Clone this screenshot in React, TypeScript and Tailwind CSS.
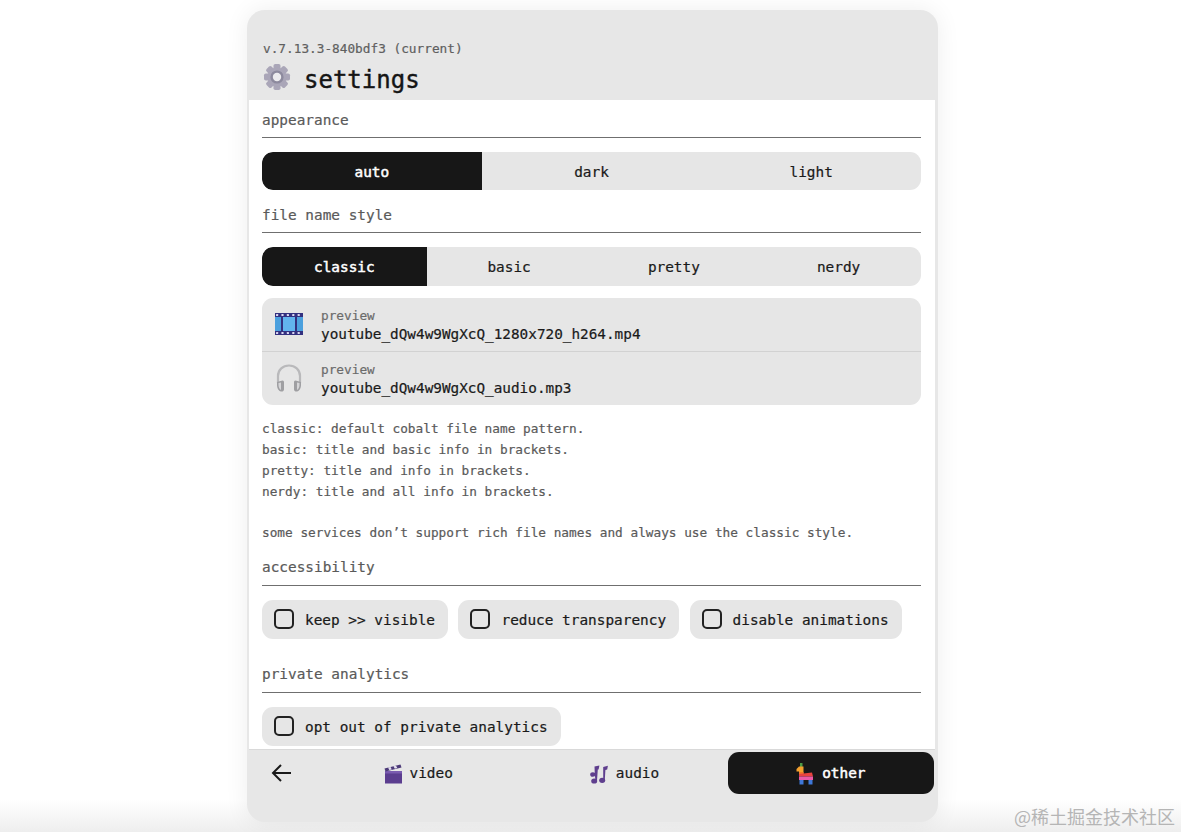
import { ReactNode } from 'react'

const mono = "font-['DejaVu_Sans_Mono','Liberation_Mono',monospace]"

function GearIcon() {
  const teeth = [0, 45, 90, 135, 180, 225, 270, 315]
  return (
    <svg width="28" height="28" viewBox="0 0 28 28">
      {teeth.map((a) => (
        <rect key={a} x="10.5" y="1" width="7" height="7" rx="1.8" fill="#aaa6b8" transform={`rotate(${a} 14 14)`} />
      ))}
      <circle cx="14" cy="14" r="9.5" fill="#aaa6b8" />
      <circle cx="14" cy="14" r="6.6" fill="#8d8a9e" />
      <circle cx="14" cy="14" r="4.2" fill="#ecebee" />
    </svg>
  )
}

function FilmIcon() {
  const holes = [2, 7.4, 12.8, 18.2, 23.6]
  return (
    <svg width="30" height="24" viewBox="0 0 30 24">
      <rect x="1" y="1" width="28" height="22" fill="#33307f" />
      <rect x="1" y="5" width="6" height="14" fill="#4ba0de" />
      <rect x="9" y="5" width="12" height="14" fill="#62b4ee" />
      <rect x="23" y="5" width="6" height="14" fill="#4ba0de" />
      {holes.map((x) => (
        <g key={x}>
          <rect x={x} y="2" width="2.2" height="2" rx="0.6" fill="#dcd8f2" />
          <rect x={x} y="20" width="2.2" height="2" rx="0.6" fill="#dcd8f2" />
        </g>
      ))}
    </svg>
  )
}

function HeadphonesIcon() {
  return (
    <svg width="30" height="30" viewBox="0 0 30 30">
      <path d="M4 20 V13 C4 6.5 9 2.5 15 2.5 C21 2.5 26 6.5 26 13 V20" fill="none" stroke="#b9b9bb" strokeWidth="2.2" />
      <path d="M3 19 L8.5 17.5 C9.8 17.5 10 18.5 10 19.5 L10 26.5 C10 28 8.5 28.8 7 28.5 C4.5 28 3 25 3 22 Z" fill="#9f9fa2" />
      <path d="M27 19 L21.5 17.5 C20.2 17.5 20 18.5 20 19.5 L20 26.5 C20 28 21.5 28.8 23 28.5 C25.5 28 27 25 27 22 Z" fill="#9f9fa2" />
      <path d="M4.5 20 L7 19.5 L7 27 C5.5 26.5 4.5 24 4.5 22 Z" fill="#d6d6d8" />
      <path d="M25.5 20 L23 19.5 L23 27 C24.5 26.5 25.5 24 25.5 22 Z" fill="#d6d6d8" />
    </svg>
  )
}

function ClapperIcon() {
  return (
    <svg width="18" height="20" viewBox="0 0 18 20">
      <rect x="1" y="7" width="17" height="12.5" fill="#5b3d8f" />
      <rect x="1" y="7" width="17" height="2.5" fill="#7a5bb0" />
      <path d="M0.5 4.5 L16.5 0.5 L17.5 3.5 L1.5 7.5 Z" fill="#4c3a78" />
      <path d="M4 3.6 L6.5 3 L7.8 5.4 L5.3 6 Z M9.5 2.3 L12 1.7 L13.3 4 L10.8 4.7 Z" fill="#e4e0f0" />
    </svg>
  )
}

function NotesIcon() {
  return (
    <svg width="18" height="19" viewBox="0 0 18 19">
      <g fill="#5f3f8e">
        <ellipse cx="2.8" cy="9.5" rx="2.6" ry="2.3" />
        <ellipse cx="4.2" cy="16" rx="3" ry="2.6" />
        <ellipse cx="12.2" cy="15.3" rx="3" ry="2.6" />
        <path d="M4.5 1.6 L9.4 0.4 L8.6 4.4 L7.8 4.6 L7 15.5 L5.4 15.5 L4.8 9 Z" />
        <path d="M13.2 2 L17.9 0.8 L17.2 4.6 L15.4 5 L14.8 15 L13.2 15 Z" />
      </g>
    </svg>
  )
}

function PinataIcon() {
  return (
    <svg width="18" height="22" viewBox="0 0 18 22">
      <path d="M4 0 L6.5 0 L6.5 4 L4 4 Z" fill="#4d9a44" />
      <path d="M0.5 6 L3 3.5 L7.5 3.5 L7.5 11 L3 11 L3 8.5 L0.5 8.5 Z" fill="#f2a02e" />
      <path d="M3 9 L7.5 9 L7.5 11 L3 11 Z" fill="#f0782a" />
      <path d="M3 11 L16 9.5 L17 13.5 L3 13.5 Z" fill="#e8433f" />
      <rect x="3" y="13.5" width="14" height="3.5" fill="#ea5aa6" />
      <rect x="3.5" y="17" width="4" height="4.5" fill="#3f78d8" />
      <rect x="12.5" y="17" width="4" height="4.5" fill="#3f78d8" />
    </svg>
  )
}

function SectionTitle({ children, tall }: { children: ReactNode; tall?: boolean }) {
  return (
    <div className={`border-b border-[#6f6f6f] ${tall ? 'h-[29px]' : 'h-[28px]'} text-[14.4px] leading-[20px] text-[#5a5a5a]`}>
      {children}
    </div>
  )
}

function Switcher({ items, active }: { items: string[]; active: string }) {
  return (
    <div className="flex bg-[#e6e6e6] rounded-[11px] overflow-hidden text-[14.4px]">
      {items.map((item) => (
        <div
          key={item}
          className={`flex-1 flex items-center justify-center pt-[3px] ${
            item === active ? 'bg-[#171717] text-white [-webkit-text-stroke:0.5px_white] rounded-l-[11px]' : 'text-[#1a1a1a]'
          }`}
        >
          {item}
        </div>
      ))}
    </div>
  )
}

function Toggle({ label }: { label: string }) {
  return (
    <div className="h-[39px] flex items-center pl-[12px] pr-[13px] gap-[11px] bg-[#e6e6e6] rounded-[11px] text-[14.4px] text-[#1a1a1a]">
      <div className="w-[20px] h-[20px] rounded-[5px] border-2 border-[#222222]" />
      <span className="pt-[3px]">{label}</span>
    </div>
  )
}

function PreviewRow({ icon, name, border }: { icon: ReactNode; name: string; border?: boolean }) {
  return (
    <div className={`h-[53.5px] flex items-center ${border ? 'border-b border-[#d2d2d2]' : ''}`}>
      <div className="w-[59px] pl-[12px] shrink-0 flex items-center">{icon}</div>
      <div className="flex flex-col pt-[2px]">
        <span className="text-[12.75px] leading-[18px] text-[#6b6b6b]">preview</span>
        <span className="text-[14.35px] leading-[19px] text-[#1a1a1a]">{name}</span>
      </div>
    </div>
  )
}

function NavTab({ icon, label, active }: { icon: ReactNode; label: string; active?: boolean }) {
  return (
    <div
      className={`flex-1 h-[42px] flex items-center justify-center gap-[8px] rounded-[11px] pt-[2px] text-[14.4px] ${
        active ? 'bg-[#171717] text-white [-webkit-text-stroke:0.5px_white]' : 'text-[#1a1a1a]'
      }`}
    >
      {icon}
      <span>{label}</span>
    </div>
  )
}

export default function App() {
  return (
    <div className={`${mono} relative h-[832px] overflow-hidden bg-white py-[10px] [-webkit-text-stroke:0.2px]`}>
      <div className="absolute left-0 right-0 bottom-0 h-[32px] bg-gradient-to-b from-white to-[#eeeeee]" />

      <div className="relative w-[691px] h-[812px] ml-[247px] flex flex-col rounded-[18px] overflow-hidden bg-[#e7e7e7] shadow-[0_0_24px_rgba(0,0,0,0.07)] pl-[2px] pr-[3px]">
        <div className="h-[90px] shrink-0 flex flex-col pl-[14px] pt-[30px]">
          <div className="text-[12.75px] leading-[17px] text-[#5f5f5f]">v.7.13.3-840bdf3 (current)</div>
          <div className="flex items-start gap-[13px] mt-[3px]">
            <div className="mt-[3px]">
              <GearIcon />
            </div>
            <span className="text-[24px] leading-[32px] pt-[4px] text-[#151515] [-webkit-text-stroke:0.4px]">settings</span>
          </div>
        </div>

        <div className="flex-1 bg-white pl-[13px] pr-[14px] pt-[10px] flex flex-col">
          <SectionTitle>appearance</SectionTitle>
          <div className="mt-[14px] h-[38px] grid">
            <Switcher items={['auto', 'dark', 'light']} active="auto" />
          </div>

          <div className="mt-[15px]">
            <SectionTitle>file name style</SectionTitle>
          </div>
          <div className="mt-[14px] h-[39px] grid">
            <Switcher items={['classic', 'basic', 'pretty', 'nerdy']} active="classic" />
          </div>

          <div className="mt-[12px] rounded-[11px] bg-[#e6e6e6]">
            <PreviewRow icon={<FilmIcon />} name="youtube_dQw4w9WgXcQ_1280x720_h264.mp4" border />
            <PreviewRow icon={<HeadphonesIcon />} name="youtube_dQw4w9WgXcQ_audio.mp3" />
          </div>

          <div className="mt-[14.4px] text-[12.75px] leading-[20.8px] text-[#5a5a5a]">
            <div>classic: default cobalt file name pattern.</div>
            <div>basic: title and basic info in brackets.</div>
            <div>pretty: title and info in brackets.</div>
            <div>nerdy: title and all info in brackets.</div>
            <div className="mt-[20.8px]">some services don’t support rich file names and always use the classic style.</div>
          </div>

          <div className="mt-[12.6px]">
            <SectionTitle tall>accessibility</SectionTitle>
          </div>
          <div className="mt-[14px] flex gap-[10.5px]">
            <Toggle label="keep >> visible" />
            <Toggle label="reduce transparency" />
            <Toggle label="disable animations" />
          </div>

          <div className="mt-[25px]">
            <SectionTitle tall>private analytics</SectionTitle>
          </div>
          <div className="mt-[14px] flex">
            <Toggle label="opt out of private analytics" />
          </div>
        </div>

        <div className="h-[73px] shrink-0 flex items-start pt-[2px] pr-[1px] border-t border-[#d9d9d9]">
          <div className="w-[66px] h-[42px] shrink-0 flex items-center justify-center pr-[3px] text-[#1a1a1a]">
            <svg width="20" height="20" viewBox="0 0 20 20" fill="none" stroke="currentColor" strokeWidth="2">
              <path d="M20 10 H2 M10 2 L2 10 L10 18" />
            </svg>
          </div>
          <NavTab icon={<ClapperIcon />} label="video" />
          <NavTab icon={<NotesIcon />} label="audio" />
          <NavTab icon={<PinataIcon />} label="other" active />
        </div>
      </div>

      <div className="absolute right-[6px] bottom-[3px] font-['Noto_Sans_CJK_SC',sans-serif] text-[18px] leading-[26px] text-[#b5b5b5] [-webkit-text-stroke:0]">
        @稀土掘金技术社区
      </div>
    </div>
  )
}
